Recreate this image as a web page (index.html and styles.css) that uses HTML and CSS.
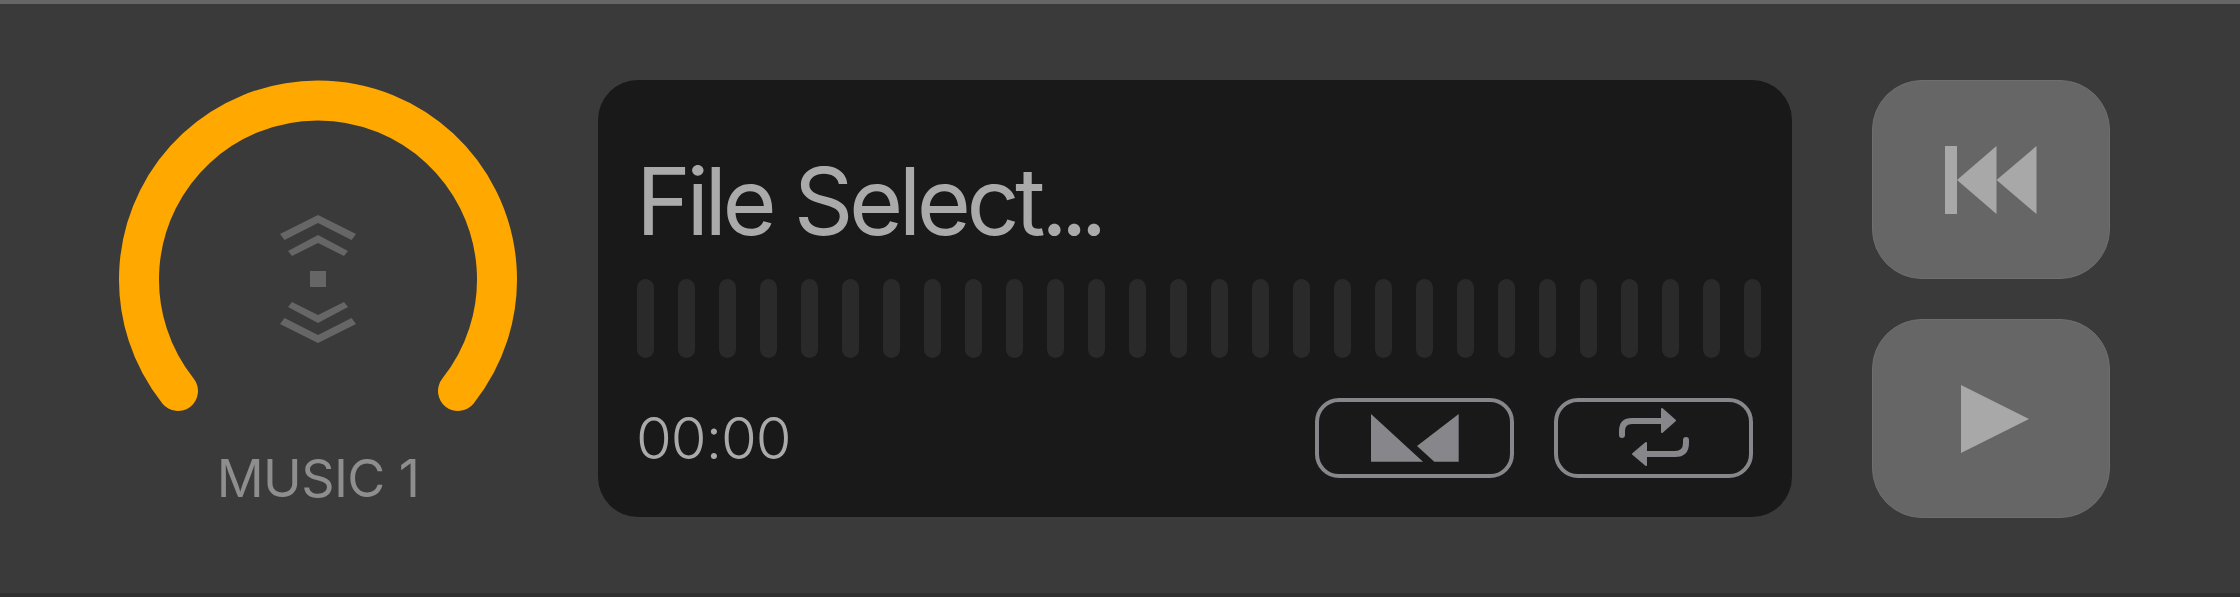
FILE: index.html
```html
<!DOCTYPE html>
<html lang="en">
<head>
    <meta charset="UTF-8">
    <meta name="viewport" content="width=device-width, initial-scale=1.0">
    <title>Music Player</title>
    <link rel="stylesheet" href="styles.css">
</head>
<body>
    <div class="player">
        <div class="knob-col">
            <svg class="knob" width="400" height="332" viewBox="0 0 400 332">
                <path class="knob-arc" d="M60 311 A179 179 0 1 1 340 311"/>
                <path class="knob-mark" d="M200 135 L238 154 L233.500 160 L200 143 L166.500 160 L162 154 Z"/>
                <path class="knob-mark" d="M200 155 L230 171 L226 176 L200 163 L174 176 L170 171 Z"/>
                <rect class="knob-mark" x="192" y="191" width="16" height="16"/>
                <path class="knob-mark" d="M200 243 L230 227 L226 222 L200 235 L174 222 L170 227 Z"/>
                <path class="knob-mark" d="M200 263 L238 244 L233.500 238 L200 255 L166.500 238 L162 244 Z"/>
            </svg>
            <div class="knob-label">MUSIC 1</div>
        </div>

        <div class="screen">
            <div class="title">File Select<span class="title-dots">...</span></div>
            <div class="bars">
                <span></span><span></span><span></span><span></span><span></span><span></span><span></span>
                <span></span><span></span><span></span><span></span><span></span><span></span><span></span>
                <span></span><span></span><span></span><span></span><span></span><span></span><span></span>
                <span></span><span></span><span></span><span></span><span></span><span></span><span></span>
            </div>
            <div class="screen-bottom">
                <div class="time">00:00</div>
                <div class="mode-btns">
                    <div class="mode-btn">
                        <svg width="88" height="48" viewBox="0 0 88 48">
                            <path class="mode-fill" d="M0 0 L52 47.700 L0 47.700 Z"/>
                            <path class="mode-fill" d="M87.700 0 L46 32 L63.300 47.700 L87.700 47.700 Z"/>
                        </svg>
                    </div>
                    <div class="mode-btn">
                        <svg width="72" height="62" viewBox="0 0 72 62">
                            <path class="mode-line" d="M4 28 V24 Q4 14 14 14 H44"/>
                            <path class="mode-fill mode-round" d="M44 2 L57 13.500 L44 25 Z"/>
                            <path class="mode-line" d="M68 33 V36 Q68 47 57 47 H27"/>
                            <path class="mode-fill mode-round" d="M28 36 L15 47 L28 58 Z"/>
                        </svg>
                    </div>
                </div>
            </div>
        </div>

        <div class="side-btns">
            <div class="side-btn">
                <svg width="92" height="68" viewBox="0 0 92 68">
                    <rect class="side-icon" x="0" y="0" width="12" height="68"/>
                    <path class="side-icon" d="M12 34 L51.500 0 V68 Z"/>
                    <path class="side-icon" d="M51.500 34 L91.500 0 V68 Z"/>
                </svg>
            </div>
            <div class="side-btn">
                <svg class="play-icon" width="68" height="68" viewBox="0 0 68 68">
                    <path class="side-icon" d="M0 0 L68 34 L0 68 Z"/>
                </svg>
            </div>
        </div>
    </div>
</body>
</html>
```

FILE: styles.css
```css
body {
    margin: 0;
    background-color: #3a3a3a;
    font-family: Inter, "Liberation Sans", sans-serif;
}

.player {
    box-sizing: border-box;
    display: flex;
    align-items: flex-start;
    height: 597px;
    padding: 76px 130px 0 118px;
    border-top: 4px solid #666666;
    border-bottom: 4px solid #2f2f2f;
}

/* knob */
.knob-col {
    width: 400px;
    display: flex;
    flex-direction: column;
    align-items: center;
    margin-right: 80px;
}

.knob {
    display: block;
}

.knob-arc {
    fill: none;
    stroke: #ffa800;
    stroke-width: 40;
    stroke-linecap: round;
}

.knob-mark {
    fill: #666666;
}

.knob-label {
    margin-top: 35px;
    font-size: 52px;
    line-height: 63px;
    letter-spacing: -0.6px;
    color: #8e8e8e;
}

/* screen */
.screen {
    box-sizing: border-box;
    width: 1194px;
    height: 437px;
    padding: 65px 30px 0 39px;
    background-color: #191919;
    border-radius: 40px;
}

.title {
    font-size: 93px;
    line-height: 112px;
    letter-spacing: -4.5px;
    color: #aaaaaa;
    margin-left: -1px;
}

.title-dots {
    letter-spacing: -7px;
}

.bars {
    display: flex;
    gap: 24px;
    margin-top: 22px;
}

.bars span {
    width: 17px;
    height: 79px;
    border-radius: 9px;
    background-color: #2a2a2a;
}

.screen-bottom {
    display: flex;
    justify-content: space-between;
    align-items: center;
    margin: 40px 9px 0 -1px;
}

.time {
    font-size: 58px;
    line-height: 80px;
    letter-spacing: -1px;
    font-weight: 300;
    color: #aaaaaa;
}

.mode-btns {
    display: flex;
    gap: 40px;
}

.mode-btn {
    box-sizing: border-box;
    width: 199px;
    height: 80px;
    display: flex;
    justify-content: center;
    align-items: center;
    border: 4px solid #86868b;
    border-radius: 24px;
}

.mode-fill {
    fill: #86868b;
}

.mode-round {
    stroke: #86868b;
    stroke-width: 2;
    stroke-linejoin: round;
}

.mode-line {
    fill: none;
    stroke: #86868b;
    stroke-width: 6;
    stroke-linecap: round;
}

/* side buttons */
.side-btns {
    display: flex;
    flex-direction: column;
    gap: 40px;
    margin-left: 80px;
}

.side-btn {
    box-sizing: border-box;
    width: 238px;
    height: 199px;
    display: flex;
    justify-content: center;
    align-items: center;
    background-color: #666666;
    border: 1px solid #6e6e6e;
    border-radius: 50px;
}

.side-icon {
    fill: #a8a8a8;
}

.play-icon {
    margin-left: 7px;
}
```
